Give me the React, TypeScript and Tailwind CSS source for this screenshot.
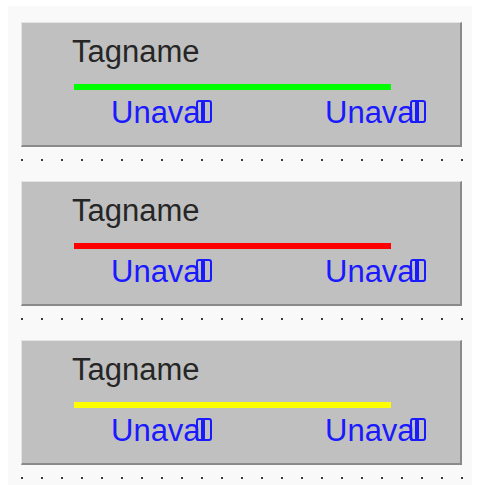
import React from "react";

const panels = [
  { id: 1, bar: "bg-[#00ff00]" },
  { id: 2, bar: "bg-[#ff0000]" },
  { id: 3, bar: "bg-[#ffff00]" },
];

const dots = Array.from({ length: 23 }, (_, i) => i);

const Unavail = () => (
  <span className="whitespace-nowrap">
    Unava
    <span className="-ml-[5px] inline-block h-[23px] w-[9px] rounded-[3px] border-2 border-[#1a1aff]" />
    <span className="-ml-[4px] inline-block h-[23px] w-[11px] rounded-[3px] border-2 border-[#1a1aff]" />
  </span>
);

const DotRow = () => (
  <div className="ml-[13px] flex gap-[18px]">
    {dots.map((d) => (
      <span key={d} className="h-[2px] w-[2px] bg-[#3a3a3a]" />
    ))}
  </div>
);

const App = () => {
  return (
    <div className="min-h-screen bg-white pl-[8px] pt-[6px] font-['Liberation_Sans',Arial,sans-serif]">
      <div className="h-[479px] w-[464px] bg-[#f9f9f9] pt-[16px]">
        {panels.map((p, i) => (
          <div key={p.id} className={i > 0 ? "mt-[20px]" : ""}>
            <div className="ml-[13px] box-border h-[125px] w-[441px] border-t border-l border-b-2 border-r-2 border-t-[#e4e4e4] border-l-[#e4e4e4] border-b-[#8a8a8a] border-r-[#8a8a8a] bg-[#c0c0c0] pt-[13px]">
              <div className="ml-[50px] text-[31px] leading-[31px] text-[#262626]">Tagname</div>
              <div className={`ml-[52px] mt-[17px] h-[6px] w-[317px] ${p.bar}`} />
              <div className="mt-[7px] flex text-[31px] leading-[31px] text-[#1a1aff]">
                <div className="ml-[89px] w-[214px]">
                  <Unavail />
                </div>
                <Unavail />
              </div>
            </div>
            <div className="mt-[12px]">
              <DotRow />
            </div>
          </div>
        ))}
      </div>
    </div>
  );
};

export default App;
